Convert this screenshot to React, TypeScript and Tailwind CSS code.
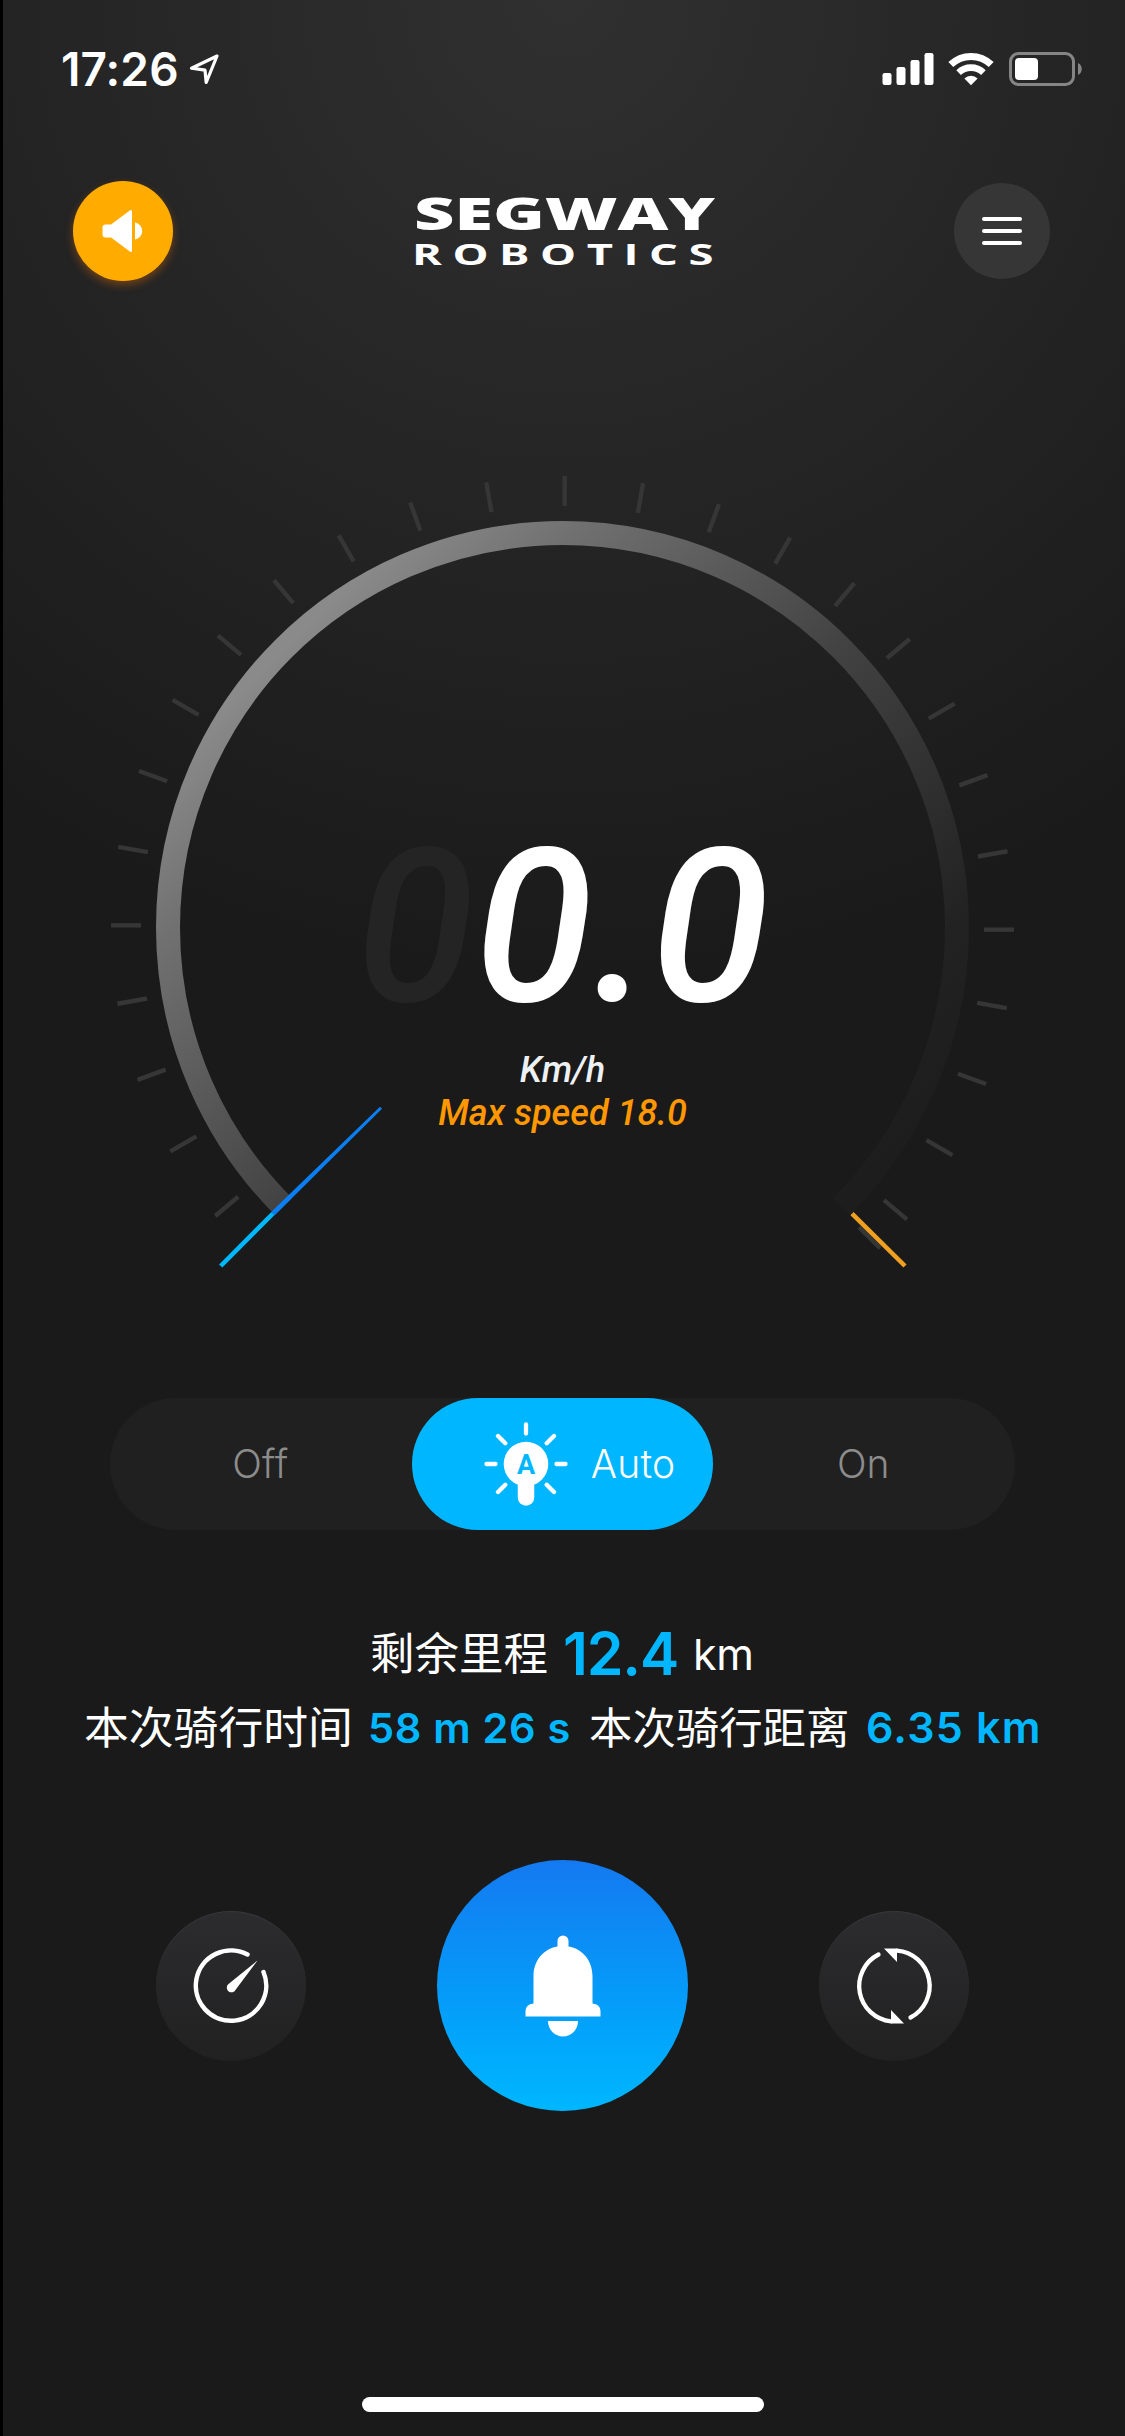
const ticks = [-130, -120, -110, -100, -90, -80, -70, -60, -50, -40, -30, -20, -10, 0, 10, 20, 30, 40, 50, 60, 70, 80, 90, 100, 110, 120, 130, 135];

function StatusBar() {
  return (
    <header className="flex h-[138px] shrink-0 items-start justify-between pl-[58px] pr-[42px] pt-[52px]">
      <div className="flex items-start">
        <span className="w-[127px] whitespace-nowrap font-[Inter,sans-serif] text-[46px] font-semibold leading-[35px] tracking-[0.1px]">17:26</span>
        <svg className="mt-[1px] h-[32px] w-[32px]" viewBox="0 0 32 32" fill="none" stroke="#fff" strokeWidth="3.2" strokeLinejoin="round">
          <path d="M29 3 3.5 15.2 17 17.2 18.2 29.5Z" />
        </svg>
      </div>
      <div className="flex items-start">
        <svg className="h-[34px] w-[52px]" viewBox="0 0 52 34" fill="#fff">
          <rect x="0.5" y="21" width="9" height="12" rx="2.2" />
          <rect x="14.5" y="15" width="9" height="18" rx="2.2" />
          <rect x="28.5" y="8" width="9" height="25" rx="2.2" />
          <rect x="42.5" y="1" width="9" height="32" rx="2.2" />
        </svg>
        <svg className="ml-[14px] h-[34px] w-[46px]" viewBox="0 0 46 34" fill="none" stroke="#fff">
          <path d="M2.8 12.6a29 29 0 0 1 40.4 0" strokeWidth="7" />
          <path d="M10.6 20.6a18 18 0 0 1 24.8 0" strokeWidth="6.6" />
          <path d="M23 33.3 16.4 26.4a9.5 9.5 0 0 1 13.2 0Z" fill="#fff" stroke="none" />
        </svg>
        <svg className="ml-[15px] h-[34px] w-[74px]" viewBox="0 0 74 34">
          <rect x="1.5" y="1.5" width="63" height="31" rx="8" fill="none" stroke="#858585" strokeWidth="3" />
          <rect x="6" y="6" width="23" height="22" rx="4" fill="#fff" />
          <path d="M69 11c5 2 5 10 0 12Z" fill="#858585" />
        </svg>
      </div>
    </header>
  );
}

function TopBar() {
  return (
    <div className="flex h-[186px] shrink-0 items-center justify-between pl-[70px] pr-[75px]">
      <button className="flex size-[100px] items-center justify-center rounded-full bg-[#ffab00] shadow-[0_4px_8px_rgba(255,120,0,0.35)]">
        <svg className="size-[44px]" viewBox="0 0 44 44" fill="#fff">
          <path d="M4.5 15.5H10L28.8 1.4Q31 .2 31 2.500V41.500Q31 43.800 28.800 42.600L10 28.500H4.500Q1.500 28.500 1.500 25.500V18.500Q1.500 15.500 4.500 15.500Z" />
          <path d="M34 13.500a8.600 8.600 0 0 1 0 17Z" />
        </svg>
      </button>
      <svg className="h-[80px] w-[330px] overflow-visible" viewBox="-13 0 330 80" fill="#fff">
        <text x="2" y="39" textLength="301" lengthAdjust="spacingAndGlyphs" className="font-['Open_Sans',sans-serif] text-[44px] font-extrabold">SEGWAY</text>
        <text x="0" y="73.500" textLength="312" lengthAdjust="spacingAndGlyphs" className="font-['Open_Sans',sans-serif] text-[28px] font-bold tracking-[6.500px]">ROBOTICS</text>
      </svg>
      <button className="flex size-[96px] flex-col items-center justify-center gap-[8px] rounded-full bg-[#363636]">
        <i className="h-[4px] w-[40px] rounded-full bg-white" />
        <i className="h-[4px] w-[40px] rounded-full bg-white" />
        <i className="h-[4px] w-[40px] rounded-full bg-white" />
      </button>
    </div>
  );
}

function Gauge() {
  return (
    <section className="relative h-[1074px] w-full shrink-0">
      <svg className="h-full w-full" viewBox="3 324 1122 1074" fill="none">
        <defs>
          <linearGradient id="arc" gradientUnits="userSpaceOnUse" x1="283.500" y1="648.500" x2="841.500" y2="1206.500">
            <stop offset="0" stopColor="#8a8a8a" />
            <stop offset="0.150" stopColor="#717171" />
            <stop offset="0.500" stopColor="#424242" />
            <stop offset="0.850" stopColor="#222222" />
            <stop offset="1" stopColor="#1d1d1d" />
          </linearGradient>
        </defs>
        {ticks.map((angle) => (
          <rect key={angle} x="562.500" y="476" width="4.400" height="30" fill="#363636" transform={`rotate(${angle} 562.5 927.5)`} />
        ))}
        <path d="M283.500 1206.500A394.500 394.500 0 1 1 841.500 1206.500" stroke="url(#arc)" strokeWidth="24" />
        <path d="M852 1213.700 905 1266" stroke="#f0a020" strokeWidth="4.500" />
        <path d="M271.400 1211.800 274.700 1215.200 382 1108.800 380 1106.700Z" fill="#0a7ff5" />
        <path d="M273 1213.500 220.700 1266" stroke="#00b7ff" strokeWidth="4.600" />
      </svg>
      <div className="absolute left-0 right-[3px] top-[498px] flex flex-col items-center font-[Roboto,sans-serif] font-medium italic">
        <div className="whitespace-nowrap text-[215px] leading-[212px]">
          <span className="text-[#242424]">0</span>
          <span>0.0</span>
        </div>
        <div className="mt-[15px] text-[36px] leading-[43px] text-[#eef1f4]">Km/h</div>
        <div className="text-[36px] leading-[43px] text-[#ff9800]">Max speed 18.0</div>
      </div>
    </section>
  );
}

function LightSwitch() {
  return (
    <div className="ml-[107px] grid h-[132px] w-[905px] shrink-0 grid-cols-3 rounded-full bg-[#202020] font-[Inter,sans-serif] text-[39px] font-light text-[#8c8c8c]">
      <div className="flex items-center justify-center pr-[1px] tracking-[0.300px]">Off</div>
      <div className="flex items-center rounded-full bg-[#00b7ff] pl-[71px] text-white">
        <svg className="h-[86px] w-[86px]" viewBox="0 0 86 86" fill="none" stroke="#fff" strokeWidth="4.300" strokeLinecap="round">
          <circle cx="43" cy="43" r="22.300" fill="#fff" stroke="none" />
          <path d="M43 50V76.500" strokeWidth="16.500" />
          <path d="M43 3.500V12.500M15 15 22.300 22.300M71 15 63.700 22.300M3.500 43H12.500M73.500 43H82.500M15 71 22.300 63.700M71 71 63.700 63.700" />
          <text x="43" y="52.500" textAnchor="middle" fill="#00b7ff" stroke="none" className="font-[Roboto,sans-serif] text-[27px] font-bold">A</text>
        </svg>
        <span className="ml-[22px] tracking-[0.300px]">Auto</span>
      </div>
      <div className="flex items-center justify-center pr-[2px]">On</div>
    </div>
  );
}

function Stats() {
  return (
    <section className="flex h-[330px] shrink-0 flex-col items-center pt-[87px] font-[Inter,'Noto_Sans_CJK_SC',sans-serif]">
      <div className="flex h-[74px] w-[750px] items-center whitespace-nowrap pl-[181px]">
        <span className="w-[180px] pt-[1px] text-[44.500px]">剩余里程</span>
        <span className="ml-[13px] w-[116px] text-[59px] font-semibold tracking-[-1.200px] text-[#00b7ff]">12.4</span>
        <span className="ml-[14px] text-[43px] font-normal tracking-[-0.300px]">km</span>
      </div>
      <div className="flex h-[74px] w-[1122px] items-center whitespace-nowrap pl-[81px]">
        <span className="w-[268px] pt-[1px] text-[44.800px]">本次骑行时间</span>
        <span className="ml-[16px] w-[206px] text-[41.500px] font-semibold tracking-[0.700px] text-[#00b7ff]">58 m 26 s</span>
        <span className="ml-[15px] w-[260px] pt-[1px] text-[43.400px]">本次骑行距离</span>
        <span className="ml-[17px] pb-[2px] text-[43px] font-semibold tracking-[1.200px] text-[#00b7ff]">6.35 km</span>
      </div>
    </section>
  );
}

function Controls() {
  return (
    <nav className="flex h-[252px] shrink-0 items-center justify-between pl-[153px] pr-[156px]">
      <button className="mb-[1px] flex size-[150px] items-center justify-center rounded-full bg-linear-to-b from-[#2c2c2e] to-[#212122] shadow-[inset_0_1px_1px_rgba(255,255,255,0.06)]">
        <svg className="size-[80px]" viewBox="-1 -1 80 80" fill="none" stroke="#fff" strokeWidth="4.500" strokeLinecap="round">
          <path d="M55.500 7.500A35.200 35.200 0 1 0 71.500 25" />
          <path d="M36.500 37 65.500 13.500 43.800 42.500A4.700 4.700 0 1 1 36.500 37Z" fill="#fff" stroke="none" />
        </svg>
      </button>
      <button className="mb-[1px] flex size-[251px] items-center justify-center rounded-full bg-linear-to-b from-[#1479f0] to-[#00b7ff]">
        <svg className="h-[102px] w-[76px]" viewBox="0 0 76 102" fill="#fff">
          <path d="M32.500 6a5.500 5.500 0 0 1 11 0V11.500C58 14 67.500 26 67.500 41V68.500Q75.500 69.500 75.500 76V81.500H.5V76Q.5 69.500 8.500 68.500V41C8.500 26 18 14 32.500 11.500Z" />
          <path d="M23 86H53a15 15.500 0 0 1-30 0Z" />
        </svg>
      </button>
      <button className="mb-[1px] flex size-[150px] items-center justify-center rounded-full bg-linear-to-b from-[#2c2c2e] to-[#212122] shadow-[inset_0_1px_1px_rgba(255,255,255,0.06)]">
        <svg className="size-[80px]" viewBox="0 0 80 80" fill="none" stroke="#fff" strokeWidth="4.300" strokeLinecap="round">
          <path d="M24.500 8.500A35.500 35.500 0 0 0 37 75.400" />
          <path d="M56.500 71.500A35.500 35.500 0 0 0 43 4.600" />
          <path d="M30 2.500H43V16ZM50 77.500H37V64Z" fill="#fff" stroke="none" />
        </svg>
      </button>
    </nav>
  );
}

export default function App() {
  return (
    <div className="h-[2436px] w-[1125px] overflow-hidden bg-black pl-[3px]">
      <main className="flex h-full w-full flex-col bg-[#1a1a1a] bg-[radial-gradient(circle_980px_at_50%_0,#303030,#1a1a1a)] text-white">
        <StatusBar />
        <TopBar />
        <Gauge />
        <LightSwitch />
        <Stats />
        <Controls />
        <div className="ml-[359px] mt-[285px] h-[15px] w-[402px] shrink-0 rounded-full bg-white" />
      </main>
    </div>
  );
}
